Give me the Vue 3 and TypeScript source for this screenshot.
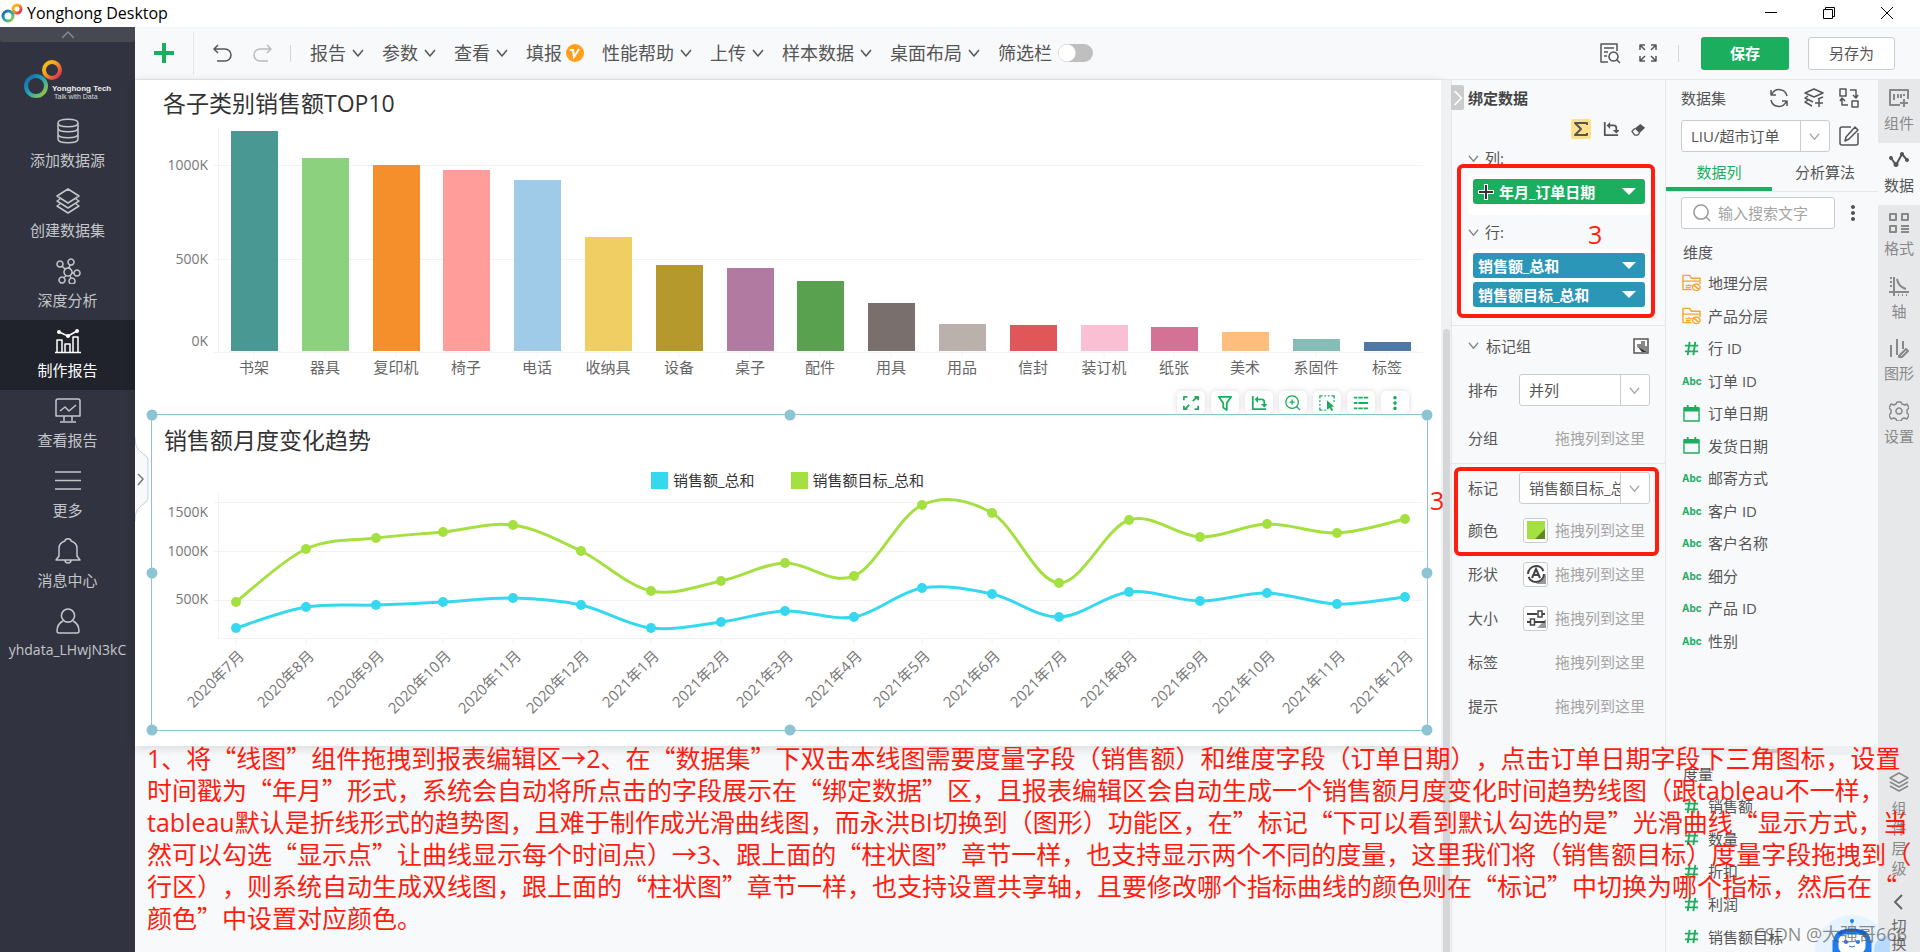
<script setup lang="ts">
import { h, ref } from 'vue'

interface IconDef { box: number; paths: string[]; width?: number }

const icons: Record<string, IconDef> = {
  plus: { box: 22, width: 4, paths: ['M11 1v20M1 11h20'] },
  undo: { box: 20, paths: ['M5 2L1 6l4 4M1 6h11a6 6 0 0 1 0 12H4'] },
  redo: { box: 20, paths: ['M15 2l4 4-4 4M19 6H8a6 6 0 0 0 0 12h8'] },
  down: { box: 12, paths: ['M1 3l5 6 5-6'] },
  up: { box: 12, paths: ['M0 9l6-6 6 6'] },
  right: { box: 12, paths: ['M3 0l6 6-6 6'] },
  left: { box: 16, width: 2, paths: ['M11 1L4 8l7 7'] },
  preview: { box: 22, paths: ['M9 20H2V2h16v7M5 6h10M5 10h4M5 14h3', 'M14.500 10a4.500 4.500 0 1 0 .01 0M18 18l3 3'] },
  expand: { box: 18, paths: ['M1 6V1h5M1 1l5 5M12 1h5v5M17 1l-5 5M1 12v5h5M1 17l5-5M12 17h5v-5M17 17l-5-5'] },
  database: { box: 26, paths: ['M3 5c0-5 20-5 20 0s-20 5-20 0v16c0 5 20 5 20 0V5M3 10c0 5 20 5 20 0M3 16c0 5 20 5 20 0'] },
  layers: { box: 26, paths: ['M13 1l11 7-11 7L2 8zM5 11l-3 2 11 7 11-7-3-2M5 16l-3 2 11 7 11-7-3-2'] },
  network: { box: 26, paths: ['M13 10a4 4 0 1 0 .01 0M5 3a3 3 0 1 0 .01 0M16 1a3 3 0 1 0 .01 0M22 12a3 3 0 1 0 .01 0M7 19a3 3 0 1 0 .01 0M17 20a3 3 0 1 0 .01 0M7 8l3 3M15 7l-1 3M17 15h2M11 18l-3 2M15 18l1 2'] },
  chart: { box: 26, paths: ['M0 24.500h26M2 24V12h5v12M10 24v-8h5v8M18 24V9h5v15M4 4l9 4 9-5', 'f:M4 2a2 2 0 1 0 .01 0M13 6a2 2 0 1 0 .01 0M22 1a2 2 0 1 0 .01 0'] },
  monitor: { box: 26, paths: ['M3 1h20a2 2 0 0 1 2 2v15H1V3a2 2 0 0 1 2-2zM5 13l5-4 4 4 7-6M9 18v5M17 18v5M5 24h16'] },
  menu: { box: 26, paths: ['M0 4h26M0 12.500h26M0 21h26'] },
  bell: { box: 26, paths: ['M1 22h24l-3-4v-7a9 8 0 0 0-6-8c0-3-6-3-6 0a9 8 0 0 0-6 8v7zM10 22c0 4 6 4 6 0'] },
  user: { box: 26, paths: ['M13 1a6.500 6.500 0 1 0 .01 0M8 13c-4 2-6 5-6 10 0 2 1 2 2 2h18c1 0 2 0 2-2 0-5-2-8-6-10'] },
  full: { box: 18, width: 2, paths: ['M1 6V2h4M13 2h4v4M1 12v4h4M13 16h4v-4M11 7l5-5M7 11l-5 5'] },
  filter: { box: 18, width: 2, paths: ['M2 2h14l-5 7v8l-4-3V9z'] },
  swap: { box: 18, width: 2, paths: ['M2 1v15h15M6 5h6c2 0 3 1 3 3v4', 'f:M8 1v8L4 5zM11 10h8l-4 4z'] },
  zoomIn: { box: 18, paths: ['M8 1a7 7 0 1 0 .01 0M13 13l4 4M8 5v6M5 8h6'] },
  list: { box: 18, width: 2, paths: ['M1 3h4M6 3h5M12 3h5M1 9h4M6 9h11M1 15h4M6 15h5M12 15h5'] },
  dots: { box: 18, paths: ['f:M9 1a2 2 0 1 0 .01 0M9 7a2 2 0 1 0 .01 0M9 13a2 2 0 1 0 .01 0'] },
  select: { box: 18, paths: ['M1 4V1h3M6 1h2M10 1h2M14 1h3v3M1 6v2M1 10v2M1 14v3h3M6 17h2M17 6v2', 'f:M9 6l8 7-3 .5 2 3.500-2 1-2-3.500-3 2z'] },
  sigma: { box: 16, width: 2, paths: ['M14 4V2H2l6 6-6 6h12v-2'] },
  eraser: { box: 16, paths: ['f:M10 2l5 4-6 6-5-5z', 'M4 7l-3 3 3 4h3l2-2'] },
  refresh: { box: 20, paths: ['M3 6a8 8 0 0 1 15 2M2 2v5h5M17 14A8 8 0 0 1 2 12M18 18v-5h-5'] },
  addLayer: { box: 20, paths: ['M10 1l9 4-9 4-9-4zM4 8l-3 2 8 4M4 12l-3 2 7 4M19 9l-5 2M15 11v8M11 15h8'] },
  convert: { box: 20, paths: ['M1 1h6v7H1zM13 13h6v6h-6zM11 2h6v7M14 7l3 3 2-3M9 17H3v-6M1 13l2-3 3 3'] },
  edit: { box: 20, paths: ['M12 1H3a2 2 0 0 0-2 2v14a2 2 0 0 0 2 2h14a2 2 0 0 0 2-2V7M7 11L16 1l3 3-9 9-4 2z'] },
  search: { box: 18, paths: ['M8 1a7 7 0 1 0 .01 0M13 13l4 4'] },
  folder: { box: 20, paths: ['M10 17H1V2h7l2 3h9v6M1 8h18M4 12q2 2 3 0q2 2 3 0M4 15h5', 'M15 11a4 3.500 0 1 0 .01 0M12 12l6 5'] },
  date: { box: 18, paths: ['M1 3h16v14H1zM1 6h16', 'f:M1 2h3V0h2v2h6V0h2v2h3v4H1z'] },
  hash: { box: 18, width: 2, paths: ['M7 2L5 16M13 2l-2 14M2 6h14M2 12h14'] },
  widget: { box: 20, width: 2, paths: ['M11 17H1V2h18v9M5 6v6M9 6v4M12 6v4M15 6v2M15 11v8M11 15h8'] },
  trend: { box: 20, width: 2, paths: ['M2 8l5 7 6-11 5 6', 'f:M2 6a2 2 0 1 0 .01 0M7 12a2.500 2.500 0 1 0 .01 0M13 2a2 2 0 1 0 .01 0M18 8a2 2 0 1 0 .01 0'] },
  format: { box: 20, width: 2, paths: ['M1 1h6v6H1zM13 1h6v6h-6zM1 13h6v6H1zM12 13h8M12 16h8M12 19h8'] },
  axis: { box: 20, width: 2, paths: ['M5 1v19M0 16h20M8 3c1 6 4 8 9 10M1 2h2M1 6h2M1 10h2M9 19h1M13 19h1M17 19h1'] },
  shapes: { box: 20, width: 2, paths: ['M2 7v12M8 1v16M14 3v8M10 18l7-7 2 2-6 6h-3z'] },
  gear: { box: 20, paths: ['M8 1h4l1 2 3 1 2-1 2 4-2 2v3l2 2-2 4-3-1-2 1-1 2H8l-1-2-2-1-3 1-2-4 2-2V9L0 7l2-4 3 1 2-1zM10 7a3 3 0 1 0 .01 0'] },
  stack: { box: 20, paths: ['M10 1l9 5-9 5-9-5zM1 10l9 5 9-5M1 14l9 5 9-5'] },
}

const Icon = (props: { name: string; size: number }) => {
  const def = icons[props.name]
  return h(
    'svg',
    { width: props.size, height: props.size, viewBox: `0 0 ${def.box} ${def.box}`, fill: 'none', 'aria-hidden': 'true' },
    def.paths.map((p) =>
      p.startsWith('f:')
        ? h('path', { d: p.slice(2), fill: 'currentColor' })
        : h('path', { d: p, stroke: 'currentColor', 'stroke-width': def.width ?? 1.5, 'stroke-linejoin': 'round' }),
    ),
  )
}
Icon.props = ['name', 'size']

const sideItems = [
  { icon: 'database', label: '添加数据源' },
  { icon: 'layers', label: '创建数据集' },
  { icon: 'network', label: '深度分析' },
  { icon: 'chart', label: '制作报告' },
  { icon: 'monitor', label: '查看报告' },
  { icon: 'menu', label: '更多' },
  { icon: 'bell', label: '消息中心' },
  { icon: 'user', label: 'yhdata_LHwjN3kC' },
]
const activeSide = ref('制作报告')

const menus = ['报告', '参数', '查看', '填报', '性能帮助', '上传', '样本数据', '桌面布局']
const filterBar = ref(false)

const bars = [
  { name: '书架', top: 11, color: '#499894' },
  { name: '器具', top: 38, color: '#8cd17d' },
  { name: '复印机', top: 45, color: '#f58f2c' },
  { name: '椅子', top: 50, color: '#ff9d9a' },
  { name: '电话', top: 60, color: '#a0cbe8' },
  { name: '收纳具', top: 117, color: '#f1ce63' },
  { name: '设备', top: 145, color: '#b6992d' },
  { name: '桌子', top: 148, color: '#b07aa1' },
  { name: '配件', top: 161, color: '#59a14f' },
  { name: '用具', top: 183, color: '#79706e' },
  { name: '用品', top: 204, color: '#bab0ac' },
  { name: '信封', top: 205, color: '#e15759' },
  { name: '装订机', top: 205, color: '#fabfd2' },
  { name: '纸张', top: 207, color: '#d37295' },
  { name: '美术', top: 212, color: '#ffbe7d' },
  { name: '系固件', top: 219, color: '#86bcb6' },
  { name: '标签', top: 222, color: '#4e79a7' },
]
const barX = (i: number) => Math.round(96 + i * 70.8)

const months = [
  '2020年7月', '2020年8月', '2020年9月', '2020年10月', '2020年11月', '2020年12月',
  '2021年1月', '2021年2月', '2021年3月', '2021年4月', '2021年5月', '2021年6月',
  '2021年7月', '2021年8月', '2021年9月', '2021年10月', '2021年11月', '2021年12月',
]
const monthX = [84, 154, 224, 291, 361, 429, 499, 569, 633, 702, 770, 840, 907, 977, 1048, 1115, 1185, 1253]
const series = [
  { name: '销售额_总和', color: '#36d8f0', y: [136, 115, 113, 110, 106, 113, 136, 130, 119, 125, 96, 102, 125, 100, 109, 101, 112, 105] },
  { name: '销售额目标_总和', color: '#a4e040', y: [110, 57, 46, 40, 33, 59, 99, 89, 71, 84, 13, 21, 91, 28, 45, 32, 41, 27] },
]

function smooth(ys: number[]): string {
  const at = (i: number) => {
    const k = Math.min(Math.max(i, 0), ys.length - 1)
    return [monthX[k], ys[k]]
  }
  let d = `M${monthX[0]} ${ys[0]}`
  for (let i = 0; i < ys.length - 1; i++) {
    const [a, b, c, e] = [at(i - 1), at(i), at(i + 1), at(i + 2)]
    d += `C${b[0] + (c[0] - a[0]) / 6} ${b[1] + (c[1] - a[1]) / 6} ${c[0] - (e[0] - b[0]) / 6} ${c[1] - (e[1] - b[1]) / 6} ${c[0]} ${c[1]}`
  }
  return d
}

const tools = ['full', 'filter', 'swap', 'zoomIn', 'select', 'list', 'dots']
const handles = ['tl', 'tc', 'tr', 'ml', 'mr', 'bl', 'bc', 'br']

const marks = [
  { label: '形状', kind: 'shape' },
  { label: '大小', kind: 'size' },
  { label: '标签', kind: '' },
  { label: '提示', kind: '' },
]

const dimensions = [
  { type: 'folder', name: '地理分层' },
  { type: 'folder', name: '产品分层' },
  { type: 'hash', name: '行 ID' },
  { type: 'abc', name: '订单 ID' },
  { type: 'date', name: '订单日期' },
  { type: 'date', name: '发货日期' },
  { type: 'abc', name: '邮寄方式' },
  { type: 'abc', name: '客户 ID' },
  { type: 'abc', name: '客户名称' },
  { type: 'abc', name: '细分' },
  { type: 'abc', name: '产品 ID' },
  { type: 'abc', name: '性别' },
]
const measures = ['销售额', '数量', '折扣', '利润', '销售额目标']

const rail = [
  { icon: 'widget', label: '组件' },
  { icon: 'trend', label: '数据' },
  { icon: 'format', label: '格式' },
  { icon: 'axis', label: '轴' },
  { icon: 'shapes', label: '图形' },
  { icon: 'gear', label: '设置' },
]
const activeRail = ref('数据')

const noteLines = [
  '1、将“线图”组件拖拽到报表编辑区→2、在“数据集”下双击本线图需要度量字段（销售额）和维度字段（订单日期），点击订单日期字段下三角图标，设置',
  '时间戳为“年月”形式，系统会自动将所点击的字段展示在“绑定数据”区，且报表编辑区会自动生成一个销售额月度变化时间趋势线图（跟tableau不一样，',
  'tableau默认是折线形式的趋势图，且难于制作成光滑曲线图，而永洪BI切换到（图形）功能区，在”标记“下可以看到默认勾选的是”光滑曲线“显示方式，当',
  '然可以勾选“显示点”让曲线显示每个时间点）→3、跟上面的“柱状图”章节一样，也支持显示两个不同的度量，这里我们将（销售额目标）度量字段拖拽到（',
  '行区），则系统自动生成双线图，跟上面的“柱状图”章节一样，也支持设置共享轴，且要修改哪个指标曲线的颜色则在“标记”中切换为哪个指标，然后在“',
  '颜色”中设置对应颜色。',
]
const noteRuns = noteLines.map((line) =>
  line.split(/([A-Za-z0-9]+)/).filter(Boolean).map((text) => ({ text, latin: /^[A-Za-z0-9]/.test(text) })),
)
</script>

<template>
  <div class="app">
    <header class="titlebar">
      <svg class="brand" width="22" height="22" viewBox="0 0 22 22" aria-hidden="true">
        <defs>
          <linearGradient id="ringWarm" x1="0" y1="0" x2="1" y2="1">
            <stop offset="0" stop-color="#f6c518" /><stop offset="0.400" stop-color="#f5a01e" /><stop offset="1" stop-color="#e0205c" />
          </linearGradient>
          <linearGradient id="ringCool" x1="0" y1="0" x2="1" y2="1">
            <stop offset="0" stop-color="#1660a8" /><stop offset="0.500" stop-color="#22a8b8" /><stop offset="1" stop-color="#a4cc30" />
          </linearGradient>
        </defs>
        <circle cx="16" cy="7" r="4" fill="none" stroke="url(#ringWarm)" stroke-width="3" />
        <circle cx="7" cy="14" r="5" fill="none" stroke="url(#ringCool)" stroke-width="3" />
      </svg>
      <span class="app-name">Yonghong Desktop</span>
      <div class="window-buttons">
        <button aria-label="最小化"><svg width="14" height="14" viewBox="0 0 14 14"><path d="M1 6.500h12" stroke="#000" /></svg></button>
        <button aria-label="还原"><svg width="14" height="14" viewBox="0 0 14 14" fill="none" stroke="#000"><path d="M1.500 3.500h9v9h-9zM3.500 3V1.500h9v9H11" /></svg></button>
        <button aria-label="关闭"><svg width="14" height="14" viewBox="0 0 14 14"><path d="M1 1l12 12M13 1L1 13" stroke="#000" /></svg></button>
      </div>
    </header>

    <div class="body">
      <nav class="sidebar">
        <button class="collapse" aria-label="收起"><Icon name="up" :size="12" /></button>
        <svg class="logo" width="105" height="44" viewBox="0 0 105 44" role="img" aria-label="Yonghong Tech">
          <circle cx="32" cy="13" r="8" fill="none" stroke="url(#ringWarm)" stroke-width="4" />
          <circle cx="16" cy="29" r="10" fill="none" stroke="url(#ringCool)" stroke-width="4" />
          <text x="32" y="34" class="logo-name">Yonghong Tech</text>
          <text x="34" y="42" class="logo-sub">Talk with Data</text>
        </svg>
        <a v-for="item in sideItems" :key="item.label" href="#" class="side-item" :class="{ active: item.label === activeSide, account: item.icon === 'user' }" @click.prevent="activeSide = item.label">
          <Icon :name="item.icon" :size="26" />
          <span>{{ item.label }}</span>
        </a>
      </nav>

      <div class="work">
        <div class="toolbar">
          <button class="add" aria-label="新建"><Icon name="plus" :size="22" /></button>
          <button class="history" aria-label="撤销"><Icon name="undo" :size="20" /></button>
          <button class="history faded" aria-label="重做"><Icon name="redo" :size="20" /></button>
          <i class="bar-sep"></i>
          <div class="menus">
            <button v-for="m in menus" :key="m" class="menu">
              <span>{{ m }}</span>
              <svg v-if="m === '填报'" class="vip" width="18" height="18" viewBox="0 0 18 18"><circle cx="9" cy="9" r="9" fill="#ff9f1c" /><path d="M4 6h3l1 7 5-8" fill="none" stroke="#fff" stroke-width="2" /></svg>
              <Icon v-else name="down" :size="12" />
            </button>
            <label class="menu" for="filter-bar">筛选栏<input id="filter-bar" v-model="filterBar" type="checkbox" class="switch" /></label>
          </div>
          <button class="tool" aria-label="预览"><Icon name="preview" :size="22" /></button>
          <button class="tool" aria-label="全屏"><Icon name="expand" :size="18" /></button>
          <i class="bar-sep wide"></i>
          <button class="save">保存</button>
          <button class="save-as">另存为</button>
        </div>

        <div class="content">
          <main class="canvas">
            <div class="page">
              <section class="bar-widget">
                <h2>各子类别销售额TOP10</h2>
                <svg class="plot" viewBox="0 0 1306 271">
                  <g stroke="#f1f2f3">
                    <path d="M79 45.500H1288M79 139.500H1288M79 232.500H1288M83.500 8V233" />
                    <path v-for="(b, i) in bars" :key="b.name" :d="`M${barX(i) + 23} 233v4`" />
                  </g>
                  <rect v-for="(b, i) in bars" :key="b.name" :x="barX(i)" :y="b.top" width="47" :height="231 - b.top" :fill="b.color" />
                  <g class="tick" text-anchor="end">
                    <text x="73" y="50">1000K</text><text x="73" y="144">500K</text><text x="73" y="226">0K</text>
                  </g>
                  <g class="category" text-anchor="middle">
                    <text v-for="(b, i) in bars" :key="b.name" :x="barX(i) + 23" y="253">{{ b.name }}</text>
                  </g>
                </svg>
              </section>

              <div class="widget-tools">
                <button v-for="t in tools" :key="t" :aria-label="t"><Icon :name="t" :size="16" /></button>
              </div>

              <section class="line-widget">
                <h2>销售额月度变化趋势</h2>
                <ul class="legend">
                  <li v-for="s in series" :key="s.name"><i :style="{ background: s.color }"></i>{{ s.name }}</li>
                </ul>
                <svg class="plot" viewBox="0 0 1275 238">
                  <g stroke="#f1f2f3">
                    <path d="M62 10.500H1271M62 59.500H1271M62 108.500H1271M66 146.500H1271M66.500 2V147" />
                    <path v-for="x in monthX" :key="x" :d="`M${x} 147v5`" />
                  </g>
                  <g v-for="s in series" :key="s.name" :fill="s.color">
                    <path :d="smooth(s.y)" fill="none" :stroke="s.color" stroke-width="3" />
                    <circle v-for="(y, i) in s.y" :key="i" :cx="monthX[i]" :cy="y" r="5" />
                  </g>
                  <g class="tick" text-anchor="end">
                    <text x="56" y="25">1500K</text><text x="56" y="64">1000K</text><text x="56" y="112">500K</text>
                  </g>
                  <g class="month" text-anchor="end">
                    <text v-for="(m, i) in months" :key="m" :transform="`translate(${monthX[i] + 9} 165) rotate(-45)`">{{ m }}</text>
                  </g>
                </svg>
                <i v-for="p in handles" :key="p" class="handle" :class="p"></i>
              </section>

              <button class="drawer" aria-label="展开">
                <svg width="15" height="84" viewBox="0 0 15 84" fill="none"><path d="M0 0c0 8 2 12 6 15l5 4q2 2 2 4v37q0 3-2 5l-5 4c-4 3-6 7-6 15" fill="#f8f9fb" stroke="#c9cdd2" /><path d="M3 37l5 5-5 6" stroke="#777" stroke-width="1.500" /></svg>
              </button>
            </div>
          </main>
          <div class="scroll"><i></i></div>

          <aside class="binding">
            <button class="fold" aria-label="收起面板"><Icon name="right" :size="14" /></button>
            <h3>绑定数据</h3>
            <div class="binding-tools">
              <button class="sum" aria-label="汇总"><Icon name="sigma" :size="16" /></button>
              <button aria-label="行列互换"><Icon name="swap" :size="16" /></button>
              <button aria-label="清除"><Icon name="eraser" :size="15" /></button>
            </div>
            <div class="group-name"><Icon name="down" :size="11" />列:</div>
            <div class="drop">
              <button class="pill green"><svg width="16" height="16" viewBox="0 0 16 16"><path d="M8 0v16M0 8h16" stroke="#fff" stroke-width="4" /><path d="M8 1v14M1 8h14" stroke="#333" stroke-width="2" /></svg><span>年月_订单日期</span><i></i></button>
            </div>
            <div class="group-name rows">
              <Icon name="down" :size="11" />行:
            </div>
            <div class="drop">
              <button class="pill"><span>销售额_总和</span><i></i></button>
              <button class="pill"><span>销售额目标_总和</span><i></i></button>
            </div>
            <div class="mark-group"><Icon name="down" :size="11" /><span>标记组</span>
              <svg width="16" height="16" viewBox="0 0 16 16"><path d="M1 1h14v14H1z" fill="#fff" stroke="#555" stroke-width="1.500" /><path d="M4 9V6h4V3h4v5h2v6z" fill="#888" /><path d="M5 9l9 5H9z" fill="#333" /></svg>
            </div>
            <div class="field layout-field">
              <label for="layout">排布</label>
              <div class="combo"><select id="layout"><option>并列</option></select><Icon name="down" :size="11" /></div>
            </div>
            <div class="field"><span>分组</span><em>拖拽列到这里</em></div>
            <div class="field mark-field">
              <label for="mark">标记</label>
              <div class="combo"><select id="mark"><option>销售额目标_总和</option></select><Icon name="down" :size="11" /></div>
            </div>
            <div class="field">
              <span>颜色</span>
              <button class="swatch" aria-label="颜色"><svg width="18" height="18" viewBox="0 0 18 18"><path d="M0 0h18v18H0z" fill="#a4e040" /><path d="M18 8v10H8z" fill="#5f8824" /></svg></button>
              <em>拖拽列到这里</em>
            </div>
            <div v-for="m in marks" :key="m.label" class="field">
              <span>{{ m.label }}</span>
              <button v-if="m.kind" class="swatch" :aria-label="m.label">
                <svg v-if="m.kind === 'shape'" width="20" height="20" viewBox="0 0 20 20" fill="none"><path d="M20 10v10H10z" fill="#999" /><circle cx="10" cy="10" r="8" stroke="#444" stroke-width="2" stroke-dasharray="22 3" /><path d="M6 14l4-9 4 9M7.500 11h5" stroke="#444" stroke-width="2" /></svg>
                <svg v-else width="20" height="20" viewBox="0 0 20 20" fill="none"><path d="M20 11v9H11z" fill="#999" /><path d="M1 6h10M16 6h3M1 14h3M9 14h10" stroke="#444" stroke-width="2" /><path d="M12 3h4v6h-4zM4.500 11h4v6h-4z" stroke="#444" stroke-width="1.500" /></svg>
              </button>
              <em>拖拽列到这里</em>
            </div>
            <div class="frame frame-top"></div>
            <div class="frame frame-mark"></div>
            <b class="step step-top">3</b>
            <b class="step step-mark">3</b>
          </aside>

          <aside class="dataset">
            <div class="ds-head">
              <span>数据集</span>
              <button aria-label="刷新"><Icon name="refresh" :size="20" /></button>
              <button aria-label="新建数据集"><Icon name="addLayer" :size="20" /></button>
              <button aria-label="替换"><Icon name="convert" :size="20" /></button>
            </div>
            <div class="ds-pick">
              <div class="combo"><select aria-label="数据集"><option>LIU/超市订单</option></select><Icon name="down" :size="11" /></div>
              <button aria-label="编辑"><Icon name="edit" :size="20" /></button>
            </div>
            <div class="tabs">
              <button class="on">数据列</button>
              <button>分析算法</button>
            </div>
            <div class="ds-search">
              <div class="search-box"><Icon name="search" :size="18" /><input type="text" aria-label="搜索" placeholder="输入搜索文字" /></div>
              <button aria-label="更多"><Icon name="dots" :size="18" /></button>
            </div>
            <h4>维度</h4>
            <ul class="columns dims">
              <li v-for="d in dimensions" :key="d.name">
                <b v-if="d.type === 'abc'" class="abc">Abc</b>
                <Icon v-else :name="d.type" :size="d.type === 'folder' ? 20 : 17" :class="d.type" />
                {{ d.name }}
              </li>
            </ul>
            <div class="splitter"><i></i></div>
            <h4>度量</h4>
            <ul class="columns measures">
              <li v-for="m in measures" :key="m"><Icon name="hash" :size="17" class="hash" />{{ m }}</li>
            </ul>
          </aside>

          <nav class="rail">
            <div class="rail-tabs">
              <button v-for="r in rail" :key="r.label" :class="{ on: r.label === activeRail }" @click="activeRail = r.label">
                <Icon :name="r.icon" :size="20" /><span>{{ r.label }}</span>
              </button>
            </div>
            <button class="vertical"><Icon name="stack" :size="20" /><span>组件层级</span></button>
            <button class="vertical switcher"><Icon name="left" :size="16" /><span>切换</span></button>
          </nav>
        </div>
      </div>
    </div>

    <svg class="robot" width="76" height="40" viewBox="0 0 76 40" aria-hidden="true">
      <circle cx="38" cy="40" r="37" fill="#e6f2fe" />
      <circle cx="74" cy="38" r="14" fill="#b8dafc" />
      <path d="M38 9v8" stroke="#bcd9fa" stroke-width="2" /><circle cx="38" cy="9" r="2" fill="#1f7df0" />
      <path d="M20 28v14M56 28v14" stroke="#1f7df0" stroke-width="3" />
      <rect x="22" y="20" width="32" height="24" rx="9" fill="#fff" stroke="#1f7df0" stroke-width="5" />
      <path d="M24 22q14-8 28 0" stroke="#1260d0" stroke-width="3" fill="none" />
      <circle cx="32" cy="30" r="2" fill="#1f7df0" /><circle cx="44" cy="30" r="2" fill="#1f7df0" />
      <path d="M35 34q3 2 6 0" stroke="#1f7df0" fill="none" />
    </svg>
    <div class="note">
      <p v-for="(runs, i) in noteRuns" :key="i"><span v-for="(r, k) in runs" :key="k" :class="{ latin: r.latin }">{{ r.text }}</span></p>
    </div>
    <div class="watermark">CSDN @大强哥666</div>
  </div>
</template>

<style>
body { margin: 0; overflow: hidden; }
</style>

<style scoped>
.app { position: relative; display: flex; flex-direction: column; height: 100vh; overflow: hidden; background: #f8f9fb; color: #555; font: 15px/20px "Open Sans", "Noto Sans CJK SC", sans-serif; }
.app * { box-sizing: border-box; }
svg { display: block; flex: none; }
button, select, input { font: inherit; color: inherit; background: none; border: 0; padding: 0; margin: 0; }
button { display: flex; align-items: center; justify-content: center; cursor: pointer; }
h2, h3, h4, p, ul { margin: 0; padding: 0; list-style: none; font-weight: 400; }
a { color: inherit; text-decoration: none; }
em { font-style: normal; }

.titlebar { display: flex; align-items: center; flex: none; height: 27px; padding: 0 4px 2px 1px; background: #fff; color: #000; font-size: 16px; }
.app-name { margin-left: 4px; flex: 1; }
.window-buttons { display: flex; }
.window-buttons button { width: 58px; height: 24px; }

.body { display: flex; flex: 1; min-height: 0; }
.sidebar { flex: none; width: 135px; background: #313440; color: #c4c6ca; }
.collapse { width: 100%; height: 15px; background: #464852; color: #85878f; border-radius: 0 0 3px 3px; }
.logo { margin: 15px 0 9px 20px; }
.logo-name { font: bold 8px "Liberation Sans", sans-serif; fill: #f0f0f0; }
.logo-sub { font: 7px "Liberation Sans", sans-serif; fill: #d8d8d8; }
.side-item { display: flex; flex-direction: column; align-items: center; gap: 6px; height: 70px; padding-top: 8px; }
.side-item.active { background: #21232c; color: #fff; }
.side-item.account { font-size: 14px; }

.work { display: flex; flex-direction: column; flex: 1; min-width: 0; }
.toolbar { display: flex; align-items: center; flex: none; height: 53px; padding-right: 25px; border-bottom: 1px solid #e4e6e9; font-size: 18px; }
.add { width: 59px; height: 43px; border-right: 1px solid #e4e6e9; color: #1cae5f; }
.history { margin-left: 19px; }
.faded { color: #bbb; }
.bar-sep { width: 1px; height: 17px; margin-left: 18px; background: #d2d5d9; }
.bar-sep.wide { margin-left: 21px; }
.menus { display: flex; flex: 1; gap: 18px; margin-left: 19px; }
.menu { display: flex; align-items: center; gap: 6px; line-height: 24px; }
.vip { margin-left: -2px; }
.switch { appearance: none; width: 35px; height: 18px; border-radius: 9px; background: radial-gradient(circle at 9px 9px, #fff 8px, #bfbfbf 9px); }
.tool { margin-left: 18px; }
.save { width: 88px; height: 33px; margin-left: 22px; border-radius: 3px; background: #1cae5f; color: #fff; font-size: 15px; font-weight: 600; }
.save-as { width: 87px; height: 33px; margin-left: 19px; border: 1px solid #c9ccd0; border-radius: 3px; background: #fff; font-size: 15px; }

.content { display: flex; flex: 1; min-height: 0; }
.canvas { flex: 1; min-width: 0; }
.page { position: relative; height: 666px; padding-top: 8px; background: #fff; box-shadow: 0 2px 10px rgba(0, 0, 0, 0.14); }
h2 { padding-bottom: 2px; font-size: 23px; line-height: 30px; color: #333; }
.bar-widget h2 { padding-left: 28px; }
.plot { width: 100%; height: auto; font-size: 15px; overflow: visible; }
.tick { fill: #777; font-size: 14px; }
.month { fill: #777; }
.category { fill: #666; }
.widget-tools { position: relative; display: flex; justify-content: flex-end; gap: 6px; padding-right: 32px; }
.widget-tools button { width: 28px; height: 23px; border-radius: 5px; background: #fff; color: #1cae5f; box-shadow: 0 0 6px rgba(0, 0, 0, 0.15); }
.line-widget { position: relative; margin: 0 13px 0 16px; padding-top: 10px; border: 1px solid #8cc4d4; }
.line-widget h2 { padding-left: 12px; }
.legend { display: flex; justify-content: center; gap: 36px; margin-top: 11px; padding-right: 4px; line-height: 24px; color: #333; }
.legend li { display: flex; align-items: center; gap: 5px; }
.legend i { width: 17px; height: 17px; }
.handle { position: absolute; width: 11px; height: 11px; border-radius: 50%; background: #8cc4d4; transform: translate(-50%, -50%); }
.tl { left: 0; top: 0; } .tc { left: 50%; top: 0; } .tr { left: 100%; top: 0; }
.ml { left: 0; top: 50%; } .mr { left: 100%; top: 50%; }
.bl { left: 0; top: 100%; } .bc { left: 50%; top: 100%; } .br { left: 100%; top: 100%; }
.drawer { position: absolute; left: 0; top: 357px; }
.scroll { position: relative; flex: none; width: 10px; padding: 249px 1px 0 2px; background: #eff1f3; }
.scroll i { display: block; height: 100%; border-radius: 4px 4px 0 0; background: #d5d6d8; }

.binding { position: relative; flex: none; width: 215px; border: solid #e4e6e9; border-width: 0 1px; padding: 8px 15px 0 16px; }
.fold { position: absolute; left: -1px; top: 5px; width: 13px; height: 25px; background: #ccc; color: #fff; border-radius: 0 2px 2px 0; }
h3 { font-size: 15px; font-weight: 600; color: #444; line-height: 20px; }
.binding-tools { display: flex; align-items: center; justify-content: flex-end; gap: 12px; height: 20px; margin: 11px 4px 0 0; }
.sum { width: 20px; height: 20px; border-radius: 2px; background: #fde08a; }
.group-name { display: flex; align-items: center; gap: 6px; height: 20px; margin-top: 9px; }
.group-name.rows { margin: 7px 0 5px; }
.group-name + .drop { margin-top: 7px; }
.group-name svg, .mark-group > svg:first-child, .combo svg { color: #888; }
.drop { display: flex; flex-direction: column; gap: 4px; padding: 4px 5px 11px; background: #fff; border-radius: 3px; }
.group-name.rows + .drop { margin-top: 7px; padding-bottom: 8px; }
.pill { height: 25px; padding: 0 9px 0 5px; gap: 5px; border-radius: 3px; background: #2b96b8; color: #fff; font-weight: 600; }
.pill.green { background: #1cae5f; }
.pill span { flex: 1; text-align: left; }
.pill i { border: solid transparent; border-width: 7px 7px 0; border-top-color: #fff; }
.mark-group { display: flex; align-items: center; gap: 7px; height: 40px; margin: 10px -15px 0 -16px; padding: 0 16px; border-top: 1px solid #e4e6e9; }
.mark-group span { flex: 1; }
.field { display: flex; align-items: center; height: 44px; }
.field > :first-child { width: 51px; flex: none; }
.field em { margin-left: auto; margin-right: 5px; color: #a4a4a4; }
.layout-field { height: 50px; }
.layout-field + .field { height: 46px; }
.mark-field { margin: 2px -15px 0 -16px; padding: 4px 15px 0 16px; height: 45px; border-top: 1px solid #e4e6e9; }
.swatch { width: 25px; height: 25px; margin-left: 4px; border: 1px solid #c9ccd0; border-radius: 3px; background: #fff; }
.combo { display: flex; flex: 1; align-items: center; min-width: 0; height: 32px; border: 1px solid #c9ccd0; border-radius: 3px; background: #fff; padding-right: 9px; }
.combo select { appearance: none; flex: 1; min-width: 0; height: 100%; margin-right: 8px; padding-left: 9px; border-right: 1px solid #c9ccd0; text-overflow: clip; overflow: hidden; }
.combo svg { color: #aaa; }
.frame { position: absolute; border: 4px solid #ff1d10; border-radius: 6px; pointer-events: none; }
.frame-top { left: 5px; right: 10px; top: 84px; height: 154px; }
.frame-mark { left: 2px; right: 6px; top: 387px; height: 89px; }
.step { position: absolute; color: #ff1d10; font-size: 25px; line-height: 32px; font-weight: 400; }
.step-top { left: 136px; top: 138px; }
.step-mark { left: -22px; top: 404px; }

.dataset { flex: none; width: 212px; height: 100%; overflow: hidden; }
.ds-head { display: flex; align-items: center; gap: 15px; height: 36px; padding: 0 19px 0 15px; }
.ds-head span { flex: 1; }
.ds-pick { display: flex; align-items: center; gap: 9px; margin-top: 4px; padding: 0 19px 0 15px; }
.tabs { display: grid; grid-template-columns: 1fr 1fr; height: 40px; border-bottom: 1px solid #e4e6e9; }
.tabs .on { color: #1cae5f; border-bottom: 4px solid #1cae5f; padding-top: 4px; }
.ds-search { display: flex; align-items: center; gap: 9px; margin-top: 5px; padding: 0 16px 0 15px; }
.search-box { display: flex; align-items: center; flex: 1; min-width: 0; gap: 7px; height: 32px; padding-left: 11px; border: 1px solid #c9ccd0; border-radius: 3px; background: #fff; color: #999; }
.search-box input { flex: 1; min-width: 0; }
.search-box input::placeholder { color: #a4a4a4; opacity: 1; }
h4 { padding-left: 17px; line-height: 24px; font-size: 15px; }
.ds-search + h4 { margin-top: 11px; }
.columns { display: grid; grid-auto-rows: 1fr; }
.columns li { display: flex; align-items: center; gap: 7px; padding-left: 16px; white-space: nowrap; }
.columns svg { width: 19px; }
.dims { height: 390px; margin-top: 3px; }
.measures { height: 163px; margin-top: 4px; }
.abc { width: 19px; color: #1cae5f; font: bold 10px/20px Inter, sans-serif; }
.folder { color: #f7a531; }
.date, .hash { color: #1cae5f; }
.splitter { display: flex; justify-content: center; height: 9px; margin: 89px 0 7px; background: #eeeff1; }
.splitter i { width: 20px; height: 4px; margin-top: 3px; background: #c4c6c8; }

.rail { display: flex; flex-direction: column; flex: none; width: 42px; height: 100%; overflow: hidden; background: #e7e8ea; color: #888; }
.rail-tabs { display: grid; grid-auto-rows: 1fr; flex: none; height: 376px; margin-bottom: 314px; }
.rail button { flex-direction: column; gap: 5px; padding-bottom: 2px; }
.rail .on { background: #f8f9fb; color: #555; }
.rail .vertical { flex: none; gap: 6px; padding: 2px 13px; }
.rail .switcher { margin-top: 12px; color: #666; line-height: 18px; }

.robot { position: absolute; right: 30px; bottom: 0; }
.note { position: absolute; left: 147px; top: 741px; color: #ff1d10; font: 25px/32px "Noto Sans CJK SC", sans-serif; text-spacing-trim: space-all; white-space: nowrap; pointer-events: none; }
.note p { height: 32px; }
.latin { font-family: "Open Sans", sans-serif; }
.watermark { position: absolute; right: 13px; bottom: 6px; color: rgba(90, 90, 90, 0.7); font-size: 18px; line-height: 24px; }
</style>
